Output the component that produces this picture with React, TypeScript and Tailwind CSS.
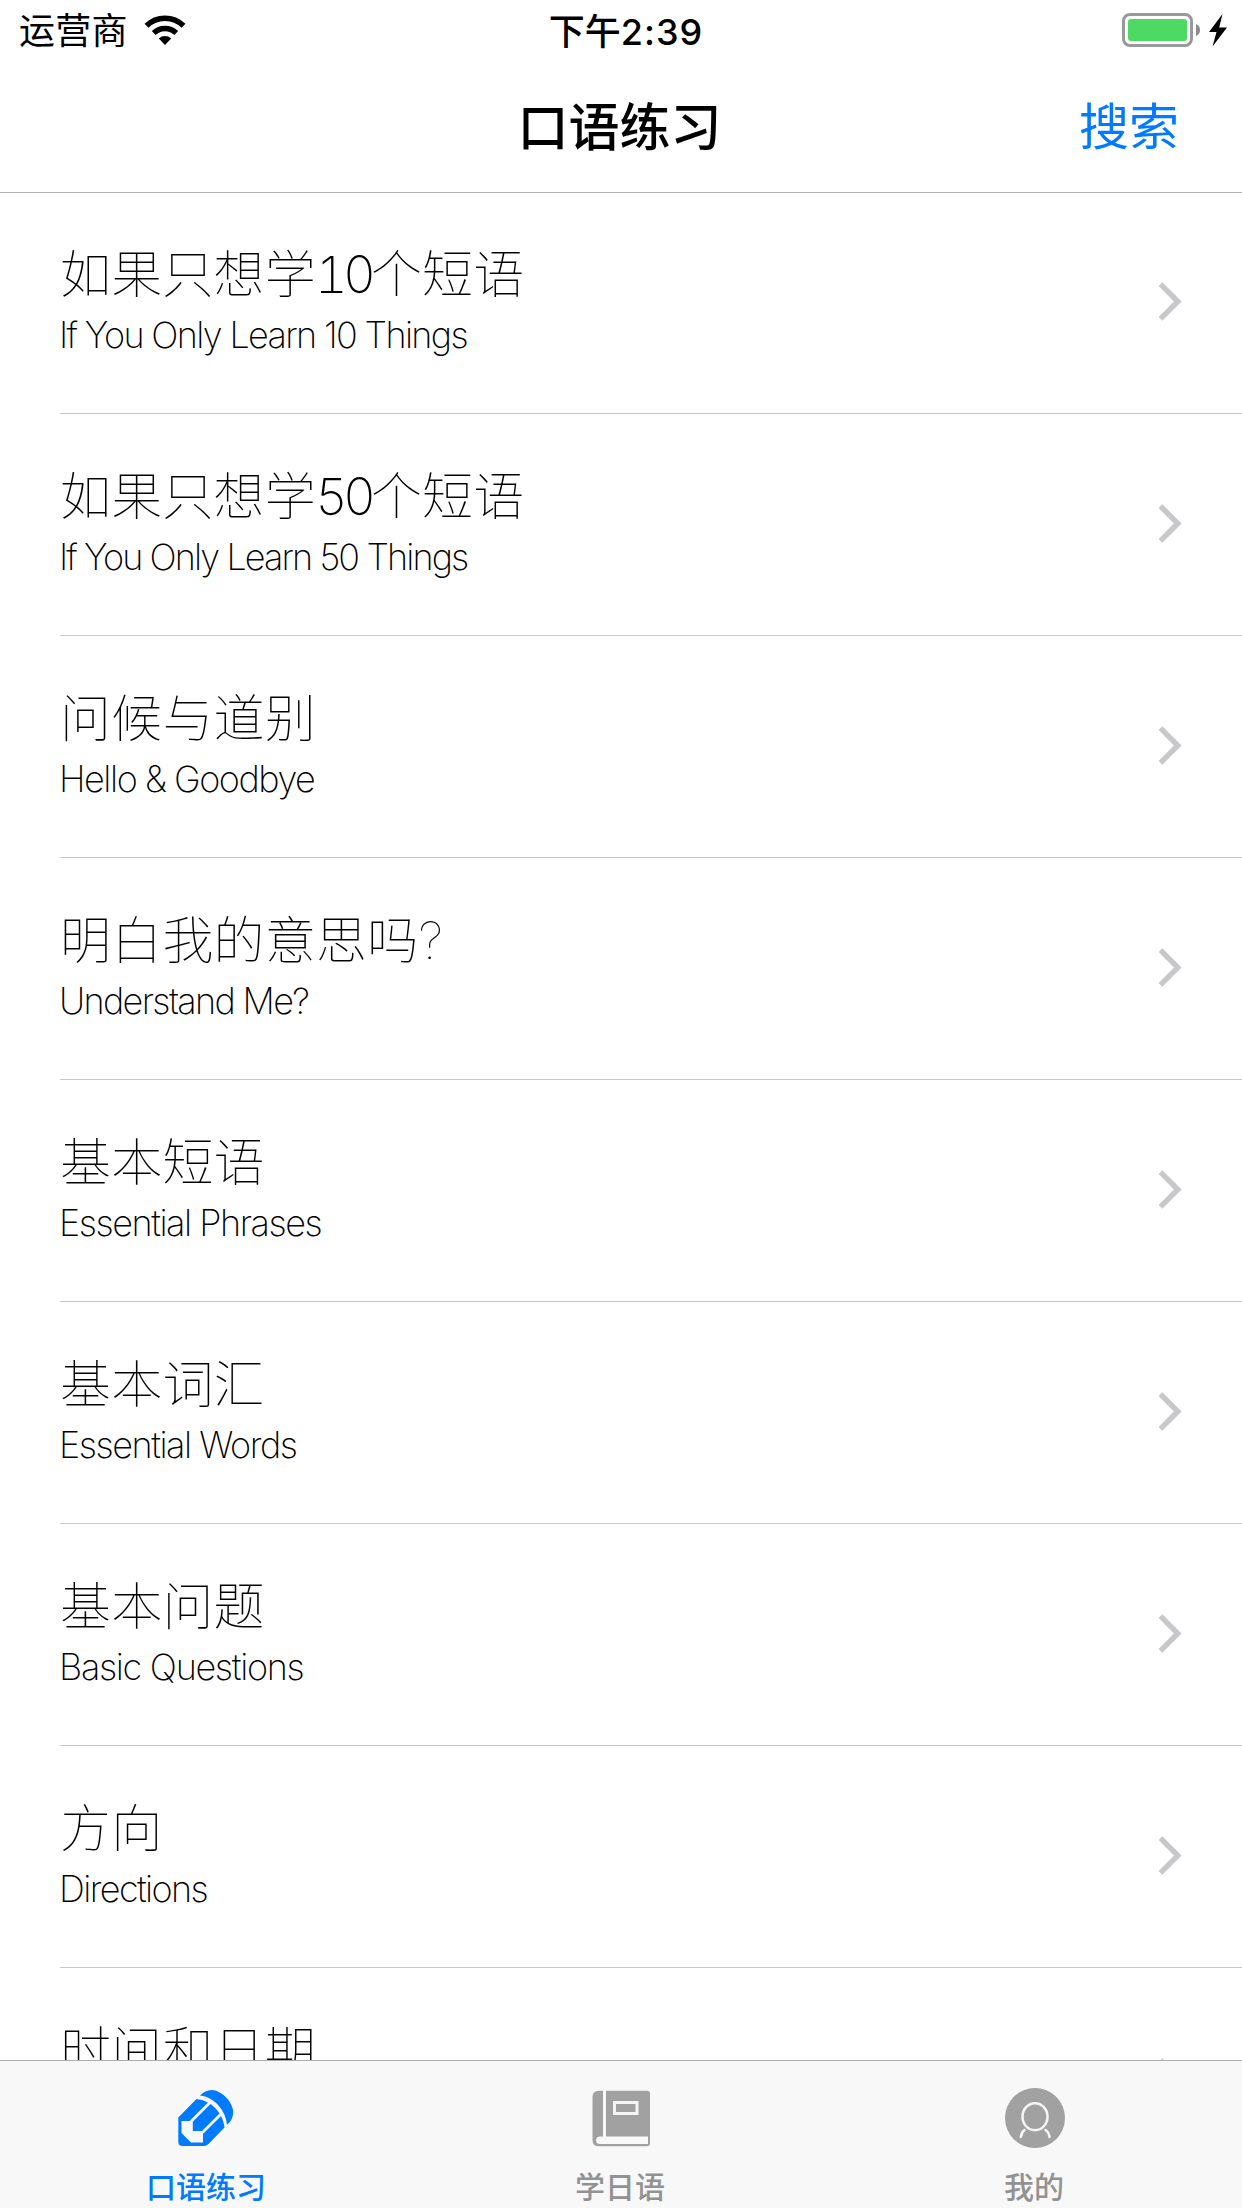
import clsx from 'clsx';
import type { ReactNode } from 'react';

interface Topic {
  title: string;
  subtitle: string;
  tracking?: string;
}

interface Tab {
  label: string;
  icon: ReactNode;
  active?: boolean;
}

const topics: Topic[] = [
  { title: '如果只想学10个短语', subtitle: 'If You Only Learn 10 Things', tracking: 'tracking-[-1.65px]' },
  { title: '如果只想学50个短语', subtitle: 'If You Only Learn 50 Things', tracking: 'tracking-[-1.9px]' },
  { title: '问候与道别', subtitle: 'Hello & Goodbye' },
  { title: '明白我的意思吗?', subtitle: 'Understand Me?', tracking: 'tracking-[-1.65px]' },
  { title: '基本短语', subtitle: 'Essential Phrases' },
  { title: '基本词汇', subtitle: 'Essential Words' },
  { title: '基本问题', subtitle: 'Basic Questions', tracking: 'tracking-[-1.3px]' },
  { title: '方向', subtitle: 'Directions', tracking: 'tracking-[-1.6px]' },
  { title: '时间和日期', subtitle: 'Time & Date' },
];

function WifiIcon() {
  return (
    <svg className="ml-[16px] h-[30px] w-[42px]" viewBox="0 0 42 30">
      <path d="M2.5 10.8A26.5 26.5 0 0 1 39.5 10.8" fill="none" stroke="#000" strokeWidth="5.6" />
      <path d="M9.7 18A16.3 16.3 0 0 1 32.3 18" fill="none" stroke="#000" strokeWidth="5.4" />
      <path d="M14.8 23.6A9 9 0 0 1 27.2 23.6L21 30Z" fill="#000" />
    </svg>
  );
}

function BatteryIcon() {
  return (
    <svg className="h-[34px] w-[106px]" viewBox="0 0 106 34">
      <rect x="1.5" y="1.5" width="68" height="31" rx="6.5" fill="none" stroke="#999" strokeWidth="3" />
      <rect x="6" y="6" width="59" height="22" rx="3" fill="#4cd964" />
      <path d="M74 11a6.5 6.5 0 0 1 0 12Z" fill="#8c8c8c" />
      <path d="M100.5 1L87 19h7.5L90.5 33.5L105 14.5h-7.8Z" fill="#000" />
    </svg>
  );
}

function Chevron() {
  return (
    <svg className="mt-[88px] mr-[58px] h-[43px] w-[28px]" viewBox="0 0 28 43" fill="none">
      <path d="M4.5 4.2L21.8 21.5L4.5 38.8" stroke="#c7c7cc" strokeWidth="5.4" />
    </svg>
  );
}

function PencilIcon() {
  return (
    <svg className="h-[60px] w-[60px]" viewBox="0 0 60 60">
      <path
        d="M23 7.5C27 3 33 .8 38.5 2.5C46 5 53 12 55.5 20C57.5 26 55 33 50 36.8C49 23 37.5 9 23 7.5Z"
        fill="#007aff"
      />
      <path
        d="M19.5 11C34 12.5 45.5 24 47.5 39.5L31.5 56Q29.5 58 27 58H5.5Q1.3 58 1.3 54V29.5Z"
        fill="#007aff"
      />
      <path d="M4.5 33H15.8V43H26V54.5H14L4.5 45Z" fill="#f8f8f8" />
      <path d="M14 33.5L33 14.5M25.5 44.5L44 26" stroke="#f8f8f8" strokeWidth="2.8" />
    </svg>
  );
}

function BookIcon() {
  return (
    <svg className="h-[60px] w-[60px]" viewBox="0 0 60 60">
      <path
        d="M8 2.7H56Q59 2.7 59 5.7V55Q59 58.3 55.5 58.3H8Q1.5 58.3 1.5 52V9Q1.5 2.7 8 2.7Z"
        fill="#a1a1a1"
      />
      <path d="M13.5 2V49" stroke="#f8f8f8" strokeWidth="3" />
      <path d="M57 48.5H9.5Q5 48.5 5 52.3T9.5 56H57Z" fill="#f8f8f8" />
      <rect x="23.5" y="14.5" width="22.5" height="11" fill="none" stroke="#f4f4f4" strokeWidth="3" />
    </svg>
  );
}

function PersonIcon() {
  return (
    <svg className="h-[60px] w-[60px]" viewBox="0 0 60 60" fill="none">
      <circle cx="30" cy="30" r="30" fill="#a1a1a1" />
      <ellipse cx="30" cy="28.7" rx="12.5" ry="13.5" stroke="#f5f5f5" strokeWidth="2.5" />
      <path
        d="M19.5 42Q16.5 44 15.8 49M40.5 42Q43.8 44 44.5 49"
        stroke="#f5f5f5"
        strokeWidth="2.6"
        strokeLinecap="round"
      />
    </svg>
  );
}

const tabs: Tab[] = [
  { label: '口语练习', icon: <PencilIcon />, active: true },
  { label: '学日语', icon: <BookIcon /> },
  { label: '我的', icon: <PersonIcon /> },
];

function StatusBar() {
  return (
    <div className="grid h-[60px] grid-cols-3 pr-[14px] pl-[19px]">
      <div className="flex h-[60px] items-center">
        <span className="mb-[4px] text-[36px] leading-[54px] tracking-[0.3px]">运营商</span>
        <WifiIcon />
      </div>
      <div className="pl-[5px] text-center text-[36px] leading-[58px] font-medium">
        下午<span className="font-['Inter'] font-medium tracking-[1px]">2:39</span>
      </div>
      <div className="flex justify-end pt-[13px]">
        <BatteryIcon />
      </div>
    </div>
  );
}

function NavBar() {
  return (
    <div className="grid h-[132px] grid-cols-3 items-start px-[63px]">
      <h1 className="col-start-2 -ml-[3px] text-center text-[51px] leading-[128px] font-medium">口语练习</h1>
      <button className="text-right text-[50px] leading-[127px] font-normal text-[#007aff]">搜索</button>
    </div>
  );
}

function TopicTitle({ title }: { title: string }) {
  // Digits are set tighter than the characters around them
  return (
    <div className="text-[51px] leading-[66px] tracking-[0.2px]">
      {title.split(/(\d+)/).map((part, i) =>
        /\d/.test(part) ? (
          <span key={i} className="-ml-px font-extralight tracking-[-5px] tabular-nums">
            {part}
          </span>
        ) : (
          part
        ),
      )}
    </div>
  );
}

function TopicRow({ title, subtitle, tracking = 'tracking-[-1.45px]' }: Topic) {
  return (
    <li className="ml-[60px] flex h-[222px] items-start justify-between border-b border-[#c8c7cc]">
      <div className="pt-[50px] font-['Inter','Noto_Sans_CJK_SC',sans-serif] font-thin">
        <TopicTitle title={title} />
        <div className={clsx('-ml-px text-[36px] leading-[55px] font-extralight', tracking)}>{subtitle}</div>
      </div>
      <Chevron />
    </li>
  );
}

export default function App() {
  return (
    <div className="flex h-[2208px] w-[1242px] flex-col overflow-hidden bg-white font-['Noto_Sans_CJK_SC',sans-serif] text-black">
      <header className="h-[193px] shrink-0 border-b border-[#b2b2b2]">
        <StatusBar />
        <NavBar />
      </header>

      <ul className="-mt-px min-h-0 flex-1 overflow-hidden">
        {topics.map((topic) => (
          <TopicRow key={topic.title} {...topic} />
        ))}
      </ul>

      <nav className="grid h-[148px] shrink-0 grid-cols-3 border-t border-[#adadad] bg-[#f8f8f8]">
        {tabs.map(({ label, icon, active }) => (
          <div
            key={label}
            className={clsx(
              'flex flex-col items-center pt-[27px]',
              active ? 'text-[#007aff]' : 'text-[#929292]',
            )}
          >
            {icon}
            <span className="mt-[15px] mr-[2px] text-[30px] leading-[44px] font-medium">{label}</span>
          </div>
        ))}
      </nav>
    </div>
  );
}
